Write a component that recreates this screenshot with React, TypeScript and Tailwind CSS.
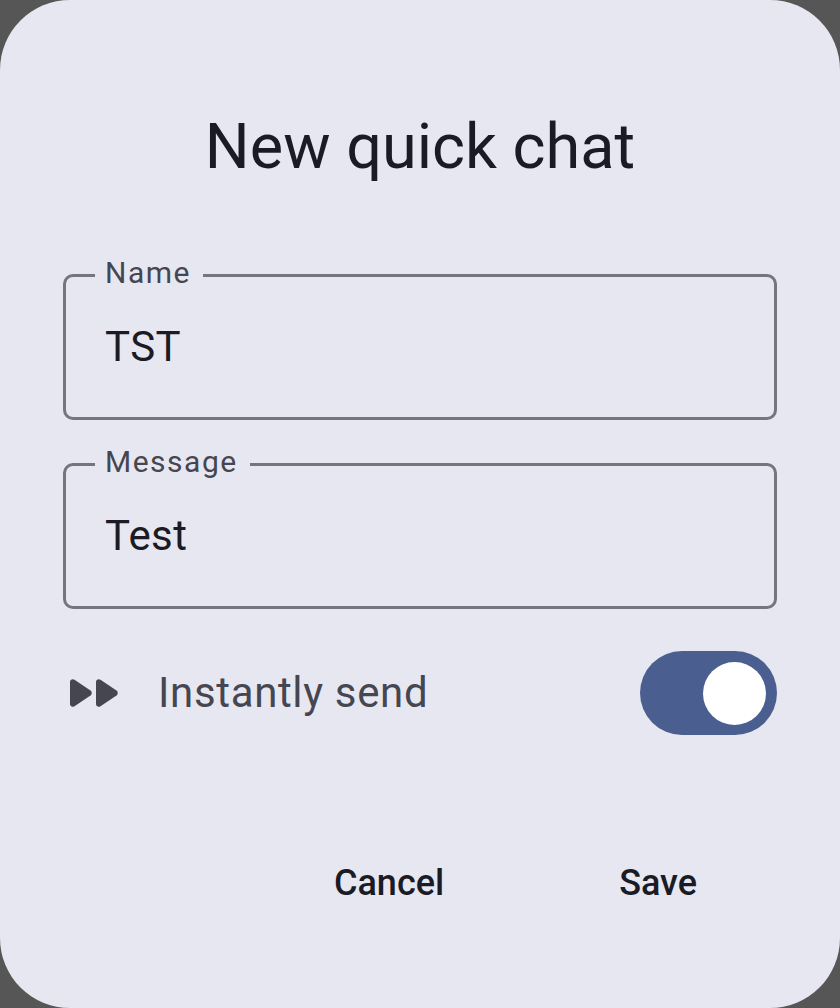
const font = { fontFamily: 'Roboto, sans-serif' };

function Field({ label, value }: { label: string; value: string }) {
  return (
    <div className="relative h-[146px] rounded-[10px] border-[3px] border-[#75757f] pl-[39px] pt-[42px]">
      <span className="absolute -top-[23px] left-[29px] bg-[#e7e7f2] pl-[10px] pr-[12px] text-[30px] leading-[38px] tracking-[1.5px] text-[#45464f]">
        {label}
      </span>
      <span className="text-[42px] leading-[56px] tracking-[0.4px] text-[#1a1b24]">{value}</span>
    </div>
  );
}

export default function App() {
  return (
    <div className="h-[1008px] w-[840px] bg-[#565656]" style={font}>
      <div className="flex h-full flex-col rounded-[70px] bg-[#e7e7f2] px-[63px]">
        <h1 className="mt-[110px] text-center text-[63px] leading-[74px] text-[#1a1b24]">New quick chat</h1>

        <div className="mt-[90px] flex flex-col gap-[43px]">
          <Field label="Name" value="TST" />
          <Field label="Message" value="Test" />
        </div>

        <div className="mt-[42px] flex h-[84px] items-center">
          <svg width="50" height="30" viewBox="0 0 50 30" className="ml-[6px] text-[#45464f]" fill="currentColor">
            <path d="M1 4C1 1.500 3.500.5 5.500 1.700L21.500 12.500c1.700 1.200 1.700 3.800 0 5L5.500 28.300C3.500 29.500 1 28.500 1 26z" />
            <path d="M27 4C27 1.500 29.500.5 31.500 1.700L47.500 12.500c1.700 1.200 1.700 3.800 0 5L31.500 28.300C29.500 29.500 27 28.500 27 26z" />
          </svg>
          <span className="ml-[39px] text-[42px] leading-[56px] tracking-[0.65px] text-[#45464f]">Instantly send</span>
          <div className="ml-auto flex h-[84px] w-[137px] items-center justify-end rounded-full bg-[#4a5f8f] pr-[11px]">
            <div className="h-[63px] w-[63px] rounded-full bg-white" />
          </div>
        </div>

        <div className="mt-[123px] flex items-center justify-end text-[36px] font-medium leading-[50px] text-[#1a1b24]">
          <span>Cancel</span>
          <span className="ml-[175px] mr-[80px]">Save</span>
        </div>
      </div>
    </div>
  );
}
